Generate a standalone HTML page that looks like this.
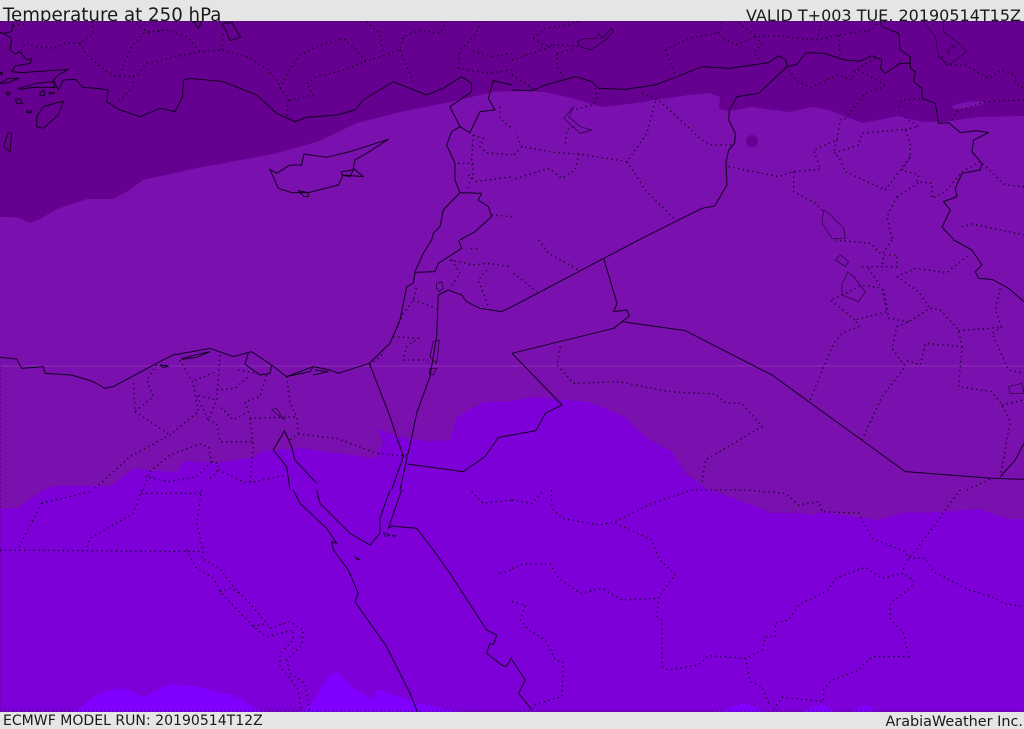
<!DOCTYPE html>
<html>
<head>
<meta charset="utf-8">
<style>
html,body{margin:0;padding:0;background:#e5e5e5;}
#p{position:relative;width:1024px;height:729px;overflow:hidden;background:#e5e5e5;font-family:"DejaVu Sans","Liberation Sans",sans-serif;color:#1a1a1a;}
.t{position:absolute;white-space:nowrap;line-height:1;}
#m{position:absolute;left:0;top:21px;width:1024px;height:691px;overflow:hidden;}
#m svg{position:absolute;left:0;top:-21px;}
.c{fill:none;stroke:#12001f;stroke-width:3;stroke-linejoin:round;}
.h{fill:none;stroke:#12001f;stroke-width:2;opacity:.8;}
.d{fill:none;stroke:#0c0018;stroke-width:4;stroke-dasharray:3.5 11;}
.e{fill:none;stroke:#0c0018;stroke-width:3;stroke-dasharray:3 9;opacity:.6;}
</style>
</head>
<body>
<div id="p">
<div class="t" style="left:3px;top:7px;font-size:18.2px;">Temperature at 250 hPa</div>
<div class="t" style="right:3px;top:8px;font-size:16px;">VALID T+003 TUE, 20190514T15Z</div>
<div class="t" style="left:3px;top:714px;font-size:14.05px;">ECMWF MODEL RUN: 20190514T12Z</div>
<div class="t" style="right:1px;top:715px;font-size:14.4px;">ArabiaWeather Inc.</div>
<div id="m">
<svg width="1024" height="729" viewBox="0 0 1024 729" xmlns="http://www.w3.org/2000/svg">
<rect x="0" y="0" width="1024" height="729" fill="#7a10ae"/>
<path fill="#660090" d="M0,0 L1024,0 L1024,116 L979,117 L942,122 L922,122 L899,116 L862,123 L829,110 L812,107 L789,112 L752,107 L729,111 L719,109 L720,97 L709,93 L689,95 L655,100 L629,104 L602,107 L572,98 L545,92 L512,91 L493,92 L450,102 L400,112 L357,123 L317,142 L273,154 L197,168 L143,180 L130,190 L113,199 L87,199 L57,209 L40,219 L30,223 L20,218 L10,217 L0,217 Z"/>
<ellipse cx="752" cy="141" rx="6" ry="6" fill="#660090"/>
<ellipse cx="968" cy="105" rx="16" ry="3" fill="#7a10ae" transform="rotate(-8 968 105)"/>
<path fill="#7e00d8" d="M0,729 L1024,729 L1024,519 L1009,519 L979,509 L939,512 L902,513 L879,520 L822,512 L812,515 L799,513 L772,513 L712,490 L709,490 L685,473 L672,452 L645,437 L625,417 L589,402 L555,399 L532,397 L512,401 L483,402 L457,417 L450,440 L427,441 L400,437 L377,428 L383,442 L377,457 L373,458 L300,448 L263,451 L250,458 L213,463 L183,461 L177,472 L133,469 L110,486 L52,486 L43,490 L17,508 L0,509 Z"/>
<g fill="#7f00ff">
<path d="M75,712 L93,697 L113,689 L127,689 L143,697 L170,684 L193,686 L217,692 L233,695 L262,712 L262,729 L75,729 Z"/>
<path d="M302,712 L313,702 L328,677 L338,672 L353,688 L373,699 L377,689 L417,703 L460,712 L460,729 L302,729 Z"/>
<path d="M718,712 L745,703 L765,712 Z M802,712 L822,704 L835,712 Z M852,712 L865,705 L873,708 L872,712 Z"/>
</g>
<rect x="0" y="365.5" width="1024" height="1" fill="#9040b8" opacity=".7"/>
<path class="e" transform="scale(.3333)" d="M0,66 H3072 M0,2133 H3072 M1,1100 V2133"/>

<g transform="scale(.3333)">
<path class="c" d="M0,97 L10,100 L35,115 L30,150 L45,162 L60,155 L80,180 L95,175 L90,190 L45,198 L35,215 L65,218 L150,212 L205,208 L175,225 L160,240 L175,270 L190,240 L225,238 L250,262 L290,265 L325,270 L320,305 L360,330 L420,350 L480,325 L525,335 L548,290 L550,240 L570,235 L670,245 L770,285 L830,340 L885,365 L920,352 L1010,345 L1065,330 L1090,300 L1180,245 L1280,285 L1330,265 L1385,230 L1415,250 L1415,275 L1350,320 L1380,380 L1355,395 L1340,435 L1365,490 L1365,540 L1380,578 L1330,630 L1320,680 L1300,700 L1295,720"/>
<path class="c" d="M1380,380 L1410,398 L1440,335 L1485,330 L1465,295 L1480,242 L1536,255"/>
<path class="c" d="M1380,578 L1445,580 L1435,600 L1465,620 L1475,650 L1425,695 L1380,720"/>
<path class="c" d="M40,70 L35,95 L10,100 M5,100 L0,97"/>
<path class="c" d="M810,508 L830,520 L870,495 L905,495 L912,462 L980,472 L1050,455 L1165,418 L1100,460 L1065,480 L1060,505 L1090,530 L1030,525 L1015,555 L925,578 L875,578 L835,565 Z"/>
<path class="c" d="M1025,515 L1060,510 L1050,530 L1025,525 Z M895,572 L925,578 L925,590 L912,590 Z"/>
<path class="c" d="M110,350 L130,320 L190,303 L175,345 L130,385 L110,380 Z"/>
<path class="c" d="M25,398 L35,400 L30,455 L10,440 Z M55,265 L110,250 L160,245 L165,262 L100,262 L60,268 Z M0,250 L25,235 L55,235 L25,248 Z M20,277 L30,277 L30,284 L20,284 Z M120,275 L133,272 L133,288 L120,285 Z M148,278 L165,278 L150,284 Z M45,298 L60,297 L68,310 L50,310 Z M80,333 L95,333 L95,338 L80,338 Z M0,216 L8,218 L5,225 L0,222 Z"/>
<path class="c" d="M665,70 L695,68 L722,112 L690,122 L680,95 Z M580,65 L605,65 L595,85 Z"/>
<path class="d" d="M240,130 L260,165 L320,215 L350,230 L410,228 L440,190 L520,172 L600,155 L665,150 L740,170 L800,205 L835,245 L840,265"/>
<path class="d" d="M360,225 L370,195 L395,140 L430,100 L500,90 L560,110 L600,155"/>
<path class="d" d="M410,70 L440,95 L500,90 M400,230 L400,260 L350,310"/>
<path class="d" d="M275,65 L280,100 L240,130 L200,128 L160,145 L110,140 L75,130 L60,160"/>
<path class="d" d="M40,78 L75,70 M665,150 L670,100"/>
<path class="d" d="M840,265 L865,215 L900,165 L960,135 L1030,115 L1070,150 L1095,185 L1030,210 L950,230 L920,250 L940,285 L870,300 L840,265 M865,300 L860,355"/>
<path class="d" d="M1095,185 L1200,150 L1210,110 L1260,90 L1320,100 L1340,65 M1200,150 L1240,245 M1100,65 L1140,100 L1150,160"/>
<path class="d" d="M1375,205 L1380,150 L1430,100 L1440,65 M1375,205 L1470,220 L1536,210 M1420,155 L1480,170 L1536,160"/>
<path class="d" d="M1500,320 L1500,355 L1536,385 M1420,405 L1415,480 L1420,520 L1400,570 M1420,405 L1450,415 L1440,440 L1460,458 L1536,465 M1375,490 L1420,490 M1405,525 L1430,545 L1536,530 M1475,645 L1536,650"/>
</g>

<g transform="translate(512,0) scale(.3333)">
<path class="c" d="M0,270 L60,272 L100,255 L190,230 L240,245 L260,265 L340,268 L430,255 L490,232 L570,200 L650,205 L770,188 L800,167 L822,180 L825,200 L855,193 L882,158 L935,160 L1000,180 L1045,183 L1080,167 L1110,180 L1105,205 L1120,220 L1165,190 L1195,190"/>
<path class="c" d="M825,200 L740,280 L675,290 L652,330 L650,360 L670,400 L668,430 L650,450 L642,490 L645,555 L608,618 L570,625 L380,720"/>
<path class="c" d="M1105,65 L1110,80 L1160,100 L1165,150 L1195,170 L1195,205 L1210,215 L1205,245 L1230,265 L1230,295 L1270,310 L1280,370 L1310,368 L1345,398 L1395,392 L1430,398 L1385,420 L1380,455 L1410,490 L1405,510 L1350,520 L1330,565 L1335,590 L1295,605 L1315,630 L1290,682 L1325,718"/>
<path class="h" d="M935,630 L930,670 L960,715 L1000,715 L995,685 L950,640 Z"/>
<path class="h" d="M1235,65 L1270,110 L1280,170 L1310,195 L1365,155 L1340,130 L1295,95 L1295,65 M1305,150 L1315,150 L1310,162 Z M1320,135 L1330,140 L1320,145 Z"/>
<path class="h" d="M185,320 L155,355 L205,400 L240,390 L205,380 L170,350 Z"/>
<path class="c" style="stroke-width:2" d="M195,125 L220,115 L255,115 L260,100 L270,115 L300,85 L305,95 L280,120 L235,150 L205,140 Z"/>
<path class="d" d="M0,180 L60,160 L130,133 L210,140 M65,115 L100,85 L170,75 L200,65 M65,115 L95,135 L130,135 M135,160 L135,200 L160,240 M135,160 L190,145"/>
<path class="d" d="M460,150 L530,115 L610,100 L670,135 L730,110 L800,108 L915,120 L980,105 L1080,90 L1100,65 M460,150 L490,225 M620,100 L630,65 M680,70 L730,105 M730,110 L750,130 L725,160 L750,185 M915,120 L925,75 M980,105 L985,180"/>
<path class="d" d="M0,225 L70,270 M390,280 L440,300 L570,420 L600,435 L665,435 M250,265 L255,300 L240,315 L185,330"/>
<path class="d" d="M430,305 L405,400 L345,485 L200,462 L130,458 L30,440 L0,470 M345,485 L400,570 L490,660 M200,462 L190,510 L150,535 L110,505 L0,540 M160,430 L165,390 L185,380 M30,440 L10,400"/>
<path class="d" d="M650,500 L800,530 L845,515 L925,508 L905,450 L975,420 L985,360 L1000,355 L1060,280 L1120,260 M1040,210 L1120,255 M830,210 L855,245 L900,262 L975,225 L1020,240 L1030,210 L1090,175"/>
<path class="d" d="M845,515 L845,575 L910,610 L930,630 M975,420 L965,460 L1040,435 L1050,400 L1180,388 L1195,430 L1195,470 L1120,570 L1000,515 L980,470 L965,460 M1180,388 L1220,380 L1170,345 M1160,320 L1170,300 L1230,295"/>
<path class="d" d="M1320,360 L1335,335 L1420,305 L1536,300 M1290,170 L1300,195 L1360,195 L1430,235 L1470,210 L1510,225 L1510,250 L1536,265"/>
<path class="d" d="M1195,470 L1170,510 L1220,525 L1215,545 L1260,550 L1260,595 L1300,575 L1350,515 L1405,485 L1480,555 L1536,560 M1155,590 L1225,545 M1155,590 L1125,650 L1140,715 M1350,680 L1380,672 L1536,705"/>
</g>

<g transform="translate(0,240) scale(.3333)">
<path class="c" d="M1295,0 L1270,40 L1245,95 L1240,130 L1220,140 L1200,240 L1170,310 L1108,370 L1015,400 L990,390 L940,380 L860,410 L815,375 L755,335 L700,350 L630,325 L520,345 L470,370 L340,440 L315,445 L280,425 L215,405 L135,400 L130,380 L65,385 L50,357 L0,352"/>
<path class="c" d="M1245,97 L1305,95 L1315,70 L1385,25 L1375,0"/>
<path class="c" d="M745,340 L735,372 L780,405 L810,400 L815,375 M545,355 L630,335 L590,352 L545,358 M480,375 L505,378 L490,383 Z M860,410 L930,395 L940,380 M940,405 L985,395 L945,390"/>
<path class="c" d="M1108,370 L1155,490 L1165,515 L1210,650 M1215,650 L1225,640 L1250,520 L1290,410 L1310,290 L1315,165 L1345,150 L1385,165 L1400,185 L1440,205 L1505,215 L1536,200"/>
<path class="c" d="M1210,650 L1175,750 M1222,650 L1200,750 M1222,672 L1390,695 L1455,650 L1495,593 L1536,585"/>
<path class="c" style="stroke-width:2" d="M1310,130 L1325,125 L1330,145 L1318,155 L1310,145 Z M1300,305 L1318,300 L1310,370 L1290,350 Z M1290,385 L1310,385 L1300,405 L1288,400 Z"/>
<path class="c" d="M855,570 L820,630 L860,680 L870,750 M855,575 L875,620 L885,660 L950,730"/>
<path class="h" d="M815,510 L830,505 L845,530 L855,540 L840,530 Z"/>
<path class="d" d="M1180,290 L1210,220 L1240,180 L1250,140 M1240,180 L1310,205 M1180,290 L1255,295 L1220,320 L1210,360 L1285,360 M1110,375 L1150,340"/>
<path class="d" d="M1355,60 L1380,100 L1350,145 M1350,60 L1420,75 L1460,70 L1536,80 M1460,90 L1435,120 L1465,200 M1415,25 L1415,40 M1430,25 L1430,40"/>
<path class="d" d="M470,375 L440,420 L460,470 L405,515 L400,420 M405,515 L510,585 M540,360 L580,430 L595,515 L510,585 L390,650 L280,750"/>
<path class="d" d="M660,345 L650,480 L625,540 L590,465 L650,480 M585,420 L650,395 M715,390 L800,405 L780,470 L735,485 L745,515 L700,540 L660,500 M650,450 L705,445 L745,410"/>
<path class="d" d="M625,540 L650,550 L660,605 L755,605 M750,535 L760,620 L750,730 M750,535 L890,530 L895,580 L870,600 M860,410 L870,490 L890,530"/>
<path class="d" d="M895,582 L1010,595 L1130,640 L1210,648 M430,750 L450,695 L510,645 L600,612 L625,620 L635,665 L655,670 L650,700 L630,715 M435,710 L510,725 L590,710 L635,665 M655,690 L740,730 L860,705"/>
</g>

<g transform="translate(512,240) scale(.3333)">
<path class="c" d="M380,0 L0,200 M275,55 L315,190 L305,215 L345,210 L352,228 L305,265 L0,340 M330,245 L520,272 L780,405 L1180,695 L1440,715 L1536,718 M1465,710 L1510,660 L1536,610 M0,340 L150,495 L100,520 L72,572 L0,585"/>
<path class="c" d="M1325,0 L1380,30 L1410,75 L1390,95 L1400,115 L1440,118 L1490,145 L1536,185"/>
<path class="h" d="M1005,95 L1005,105 L990,130 L990,165 L1040,185 L1060,155 L1025,110 Z M985,45 L970,60 L1000,80 L1010,65 Z M1490,440 L1530,430 L1536,460 L1495,460 Z"/>
<path class="d" d="M80,0 L110,40 L200,90 M5,100 L75,155"/>
<path class="d" d="M145,320 L135,375 L185,430 L320,425 L470,455 L610,462 L640,488 L690,490 L750,560 L580,660 L570,730"/>
<path class="d" d="M895,480 L935,380 L965,310 L990,280 L1040,260 L1030,240 L1125,215 L1110,145 L1050,135 L1000,160 L955,180 L1030,240"/>
<path class="d" d="M1050,600 L1110,470 L1180,380 L1140,325 L1155,260 L1190,245 L1255,205 L1285,210 L1340,270 L1350,320 L1240,310 L1225,375 L1180,360"/>
<path class="d" d="M1350,320 L1340,440 L1440,455 L1470,495 L1495,545 L1465,710 M1470,495 L1536,480 M1340,272 L1470,262 L1440,280 L1490,390 L1536,400 M1465,145 L1450,210 L1470,265"/>
<path class="d" d="M1190,245 L1130,235 L1115,150 M1155,110 L1210,85 L1305,98 L1370,45 M1155,110 L1220,155 L1250,200 M1050,80 L1155,80 L1155,45 L1115,45 L1110,80 M1105,40 L1075,10 L970,0 M1140,0 L1110,45 M1070,85 L1110,145 M1365,750 L1440,715"/>
</g>

<g transform="translate(0,490) scale(.3333)">
<path class="c" d="M880,0 L900,40 L980,115 L1010,160 L995,155 L1000,180 L1045,240 L1075,310 L1065,335 L1160,470 L1230,610 L1252,665"/>
<path class="c" d="M950,0 L960,40 L1050,130 L1110,165 L1140,130 L1140,85 L1170,0 M1205,0 L1165,115 L1175,108 L1250,115 L1300,180 L1350,250 L1460,420 L1490,435 L1480,465 L1470,460 L1460,490 L1505,525 L1520,530 L1536,500"/>
<path class="c" style="stroke-width:2" d="M1150,128 L1170,135 L1155,140 Z M1178,135 L1188,138 L1180,142 Z M1065,200 L1082,210 L1070,208 Z"/>
<path class="d" d="M0,180 L605,185 M605,0 L590,100 L610,185 L605,205 L660,235 L700,290 L750,340 L800,400 L810,415 L870,395 L910,420 L905,465 L860,510 L870,550 L915,580 L925,640 L930,665"/>
<path class="d" d="M560,180 L590,235 L640,265 L665,310 L760,410 L800,440 L880,420 L880,450 L840,490 L840,530 L870,565 L895,600 L900,640 L905,665 M660,305 L690,295 L720,310 M760,410 L800,400"/>
<path class="d" d="M425,0 L400,70 L270,145 L260,180 M125,40 L55,175 M125,40 L270,5 M425,10 L605,10 M1415,5 L1450,40 L1536,30 M1500,250 L1536,240"/>
</g>

<g transform="translate(512,490) scale(.3333)">
<path class="c" d="M0,510 L40,570 L20,610 L60,660"/>
<path class="d" d="M0,30 L60,40 L95,0"/>
<path class="d" d="M118,0 L120,55 L150,85 L260,105 L310,95 L420,40 L540,0 L700,0 L820,10 L860,45 L920,35 L930,65 L1040,70 L1080,145 L1180,185 L1190,205 L1240,205 L1265,245 L1370,300 L1440,320 L1475,340 L1536,350"/>
<path class="d" d="M310,100 L420,150 L440,205 L490,255 L440,320 L435,380 L450,390 L450,530 L470,540 L560,525 L590,497 L700,505 L750,480 L760,440 L790,440 L790,400 L830,390 L860,345 L950,300 L970,265 L1060,232 L1110,265 L1170,250 L1205,270 L1200,290 L1135,340 L1135,385 L1175,430 L1190,500 L1080,500 L1040,540 L960,570 L935,600 L935,635 L810,622 L780,665"/>
<path class="d" d="M700,505 L715,575 L750,590 L770,640 M0,235 L35,222 L115,222 L140,265 L205,310 L270,295 L330,330 L435,325"/>
<path class="d" d="M0,335 L40,345 L25,390 L50,420 L100,450 L130,510 L155,518 L150,620 L60,645 M1345,0 L1300,60 L1220,170 L1190,205 L1170,245"/>
</g>
</svg>
</div>
</div>
</body>
</html>
